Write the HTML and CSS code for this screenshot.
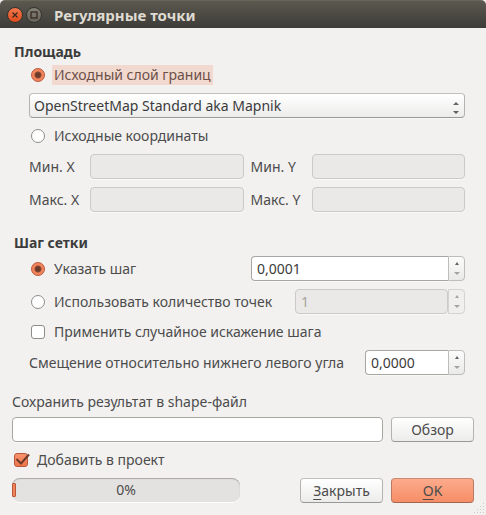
FILE: index.html
```html
<!DOCTYPE html>
<html lang="ru">
<head>
<meta charset="utf-8">
<meta name="viewport" content="width=device-width, initial-scale=1">
<title>Регулярные точки</title>
<link rel="stylesheet" href="styles.css">
</head>
<body>
<div class="window">
  <header class="titlebar">
    <button class="wm wm-close" type="button" aria-label="Закрыть окно">
      <svg viewBox="0 0 14 14"><path d="M4.500 4.500l5 5M9.500 4.500l-5 5"/></svg>
    </button>
    <button class="wm wm-max" type="button" aria-label="Развернуть">
      <svg viewBox="0 0 14 14"><rect x="4" y="4" width="6" height="6"/></svg>
    </button>
    <h1 class="title">Регулярные точки</h1>
  </header>

  <form class="dialog">
    <section class="group">
      <h2 class="heading">Площадь</h2>
      <div class="group-body">
        <div class="option">
          <input class="radio" type="radio" name="area" id="area-layer" checked>
          <label class="option-label focused" for="area-layer">Исходный слой границ</label>
        </div>
        <div class="select-box">
          <select class="field select" aria-label="Слой границ">
            <option>OpenStreetMap Standard aka Mapnik</option>
          </select>
          <svg class="select-arrows" viewBox="0 0 6 12"><path d="M0 3L3 0l3 3zM0 9h6l-3 3z"/></svg>
        </div>
        <div class="option">
          <input class="radio" type="radio" name="area" id="area-coords">
          <label class="option-label" for="area-coords">Исходные координаты</label>
        </div>
        <div class="coords">
          <label for="min-x">Мин. X</label>
          <input class="field" id="min-x" type="text" disabled>
          <label class="second" for="min-y">Мин. Y</label>
          <input class="field" id="min-y" type="text" disabled>
          <label for="max-x">Макс. X</label>
          <input class="field" id="max-x" type="text" disabled>
          <label class="second" for="max-y">Макс. Y</label>
          <input class="field" id="max-y" type="text" disabled>
        </div>
      </div>
    </section>

    <section class="group">
      <h2 class="heading">Шаг сетки</h2>
      <div class="group-body">
        <div class="row">
          <div class="option">
            <input class="radio" type="radio" name="grid" id="grid-step" checked>
            <label class="option-label" for="grid-step">Указать шаг</label>
          </div>
          <div class="spin spin-wide">
            <input class="field" type="text" value="0,0001" aria-label="Шаг">
            <div class="spin-buttons">
              <button type="button" aria-label="Больше"><svg viewBox="0 0 6 3"><path d="M1 3l2-3 2 3z"/></svg></button>
              <button type="button" aria-label="Меньше"><svg class="down" viewBox="0 0 6 3"><path d="M0 0h6L3 3z"/></svg></button>
            </div>
          </div>
        </div>
        <div class="row">
          <div class="option">
            <input class="radio" type="radio" name="grid" id="grid-count">
            <label class="option-label" for="grid-count">Использовать количество точек</label>
          </div>
          <div class="spin spin-medium spin-disabled">
            <input class="field" type="text" value="1" aria-label="Количество точек" disabled>
            <div class="spin-buttons">
              <button type="button" aria-label="Больше" disabled><svg viewBox="0 0 6 3"><path d="M1 3l2-3 2 3z"/></svg></button>
              <button type="button" aria-label="Меньше" disabled><svg class="down" viewBox="0 0 6 3"><path d="M0 0h6L3 3z"/></svg></button>
            </div>
          </div>
        </div>
        <div class="option">
          <input class="checkbox" type="checkbox" id="jitter">
          <label class="option-label" for="jitter">Применить случайное искажение шага</label>
        </div>
        <div class="row">
          <label for="inset">Смещение относительно нижнего левого угла</label>
          <div class="spin spin-narrow">
            <input class="field" type="text" id="inset" value="0,0000">
            <div class="spin-buttons">
              <button type="button" aria-label="Больше"><svg viewBox="0 0 6 3"><path d="M1 3l2-3 2 3z"/></svg></button>
              <button type="button" aria-label="Меньше"><svg class="down" viewBox="0 0 6 3"><path d="M0 0h6L3 3z"/></svg></button>
            </div>
          </div>
        </div>
      </div>
    </section>

    <section class="output">
      <label class="output-label" for="output-file">Сохранить результат в shape-файл</label>
      <div class="actions">
        <input class="field file" id="output-file" type="text">
        <button class="button" type="button">Обзор</button>
      </div>
      <div class="option">
        <span class="check-box">
          <input class="checkbox" type="checkbox" id="add" checked>
          <svg class="tick" viewBox="0 0 18 16"><path d="M3.500 7l4.500 4.500L16 2.500"/></svg>
        </span>
        <label class="option-label" for="add">Добавить в проект</label>
      </div>
      <div class="actions">
        <div class="progress" role="progressbar" aria-valuenow="0" aria-valuemin="0" aria-valuemax="100" aria-label="Выполнение"><span class="progress-chunk"></span><span class="progress-text">0%</span></div>
        <button class="button push" type="button"><u>З</u>акрыть</button>
        <button class="button primary" type="submit"><u>O</u>K</button>
      </div>
    </section>
  </form>
  <svg class="grip" viewBox="0 0 12 12" aria-hidden="true"><path d="M10 1.500h1M7 4.500h1M10 4.500h1M4 7.500h1M7 7.500h1M10 7.500h1M1 10.500h1M4 10.500h1M7 10.500h1M10 10.500h1"/></svg>
</div>
</body>
</html>
```
FILE: styles.css
```css
* { box-sizing: border-box; }

body {
  margin: 0;
  background: #f2f1f0;
  color: #4c4c4c;
  font: 14px/20px "Noto Sans", "Open Sans", sans-serif;
}

input, select, button {
  margin: 0;
  font: inherit;
  color: inherit;
}

.window {
  position: relative;
  min-height: 100vh;
}

.titlebar {
  display: flex;
  align-items: center;
  gap: 3px;
  height: 28px;
  padding: 0 7px;
  background: linear-gradient(#5b584f, #3d3c37);
  border-top: 1px solid #696559;
  border-radius: 5px 5px 0 0;
}

.wm {
  width: 16px;
  height: 16px;
  padding: 0;
  border: 1px solid #35332e;
  border-radius: 50%;
  display: flex;
}
.wm svg {
  width: 14px;
  height: 14px;
  fill: none;
  stroke: #3a2a22;
  stroke-width: 1.3;
}
.wm-close { background: linear-gradient(#f4784e, #df4c1b); }
.wm-max { background: linear-gradient(#85827a, #65635b); }

.title {
  margin: 0 0 0 9px;
  font-size: 15px;
  font-weight: bold;
  color: #dfdbd2;
}

.dialog {
  display: flex;
  flex-direction: column;
  gap: 21px;
  padding: 14px 12px 12px;
}

.heading {
  margin: 0 0 3px 2px;
  font-size: 14px;
  line-height: 20px;
  color: #3c3c3c;
}

.group-body, .output {
  display: flex;
  flex-direction: column;
  gap: 8px;
}
.group-body { padding: 0 9px 0 17px; }
.output { margin-top: -4px; }
.output-label { margin-bottom: -3px; }

.option {
  display: flex;
  align-items: center;
  gap: 7px;
  padding-left: 2px;
}
.option-label { padding: 0 2px; }
.focused {
  background: #f2d9cf;
  color: #6b5048;
}

.radio, .checkbox {
  appearance: none;
  flex: none;
  width: 14px;
  height: 14px;
  border: 1px solid #8f8d8a;
  background: #fff;
}
.radio { border-radius: 50%; }
.checkbox { border-radius: 3px; }
.radio:checked {
  border-color: #b9573a;
  background: radial-gradient(circle, #6b3a28 0 2px, #8a4a33 3px, #f3835b 4px);
}
.checkbox:checked {
  border-color: #b9573a;
  background: linear-gradient(#f9946f, #ee7447);
}
.check-box {
  position: relative;
  display: flex;
}
.tick {
  position: absolute;
  left: -1px;
  top: -1px;
  width: 18px;
  height: 16px;
  fill: none;
  stroke: #6b3a28;
  stroke-width: 2;
  pointer-events: none;
}

.field {
  display: block;
  width: 100%;
  min-width: 0;
  height: 25px;
  padding: 0 5px;
  border: 1px solid #a9a7a4;
  border-radius: 4px;
  background: #fff;
  color: #3c3c3c;
  box-shadow: 0 1px 0 #f8f8f7;
}
.field:disabled {
  border-color: #cccac8;
  background: #eae9e7;
  color: #a5a3a1;
}

.select-box { position: relative; }
.select {
  appearance: none;
  padding: 0 4px;
  border-color: #c3c1be #b5b3b0 #9a9895;
  background: linear-gradient(#fff, #ececeb);
}
.select-arrows {
  position: absolute;
  right: 6px;
  top: 9px;
  width: 6px;
  height: 12px;
  fill: #626262;
  pointer-events: none;
}

.coords {
  display: grid;
  grid-template-columns: 61px 1fr 68px 1fr;
  gap: 8px 0;
  align-items: center;
}
.second { padding-left: 7px; }

.row {
  display: flex;
  align-items: center;
  justify-content: space-between;
}
.row > label { white-space: nowrap; }

.spin {
  display: flex;
  flex: none;
}
.spin-wide { width: 214px; }
.spin-medium { width: 170px; }
.spin-narrow { width: 100px; }
.spin .field {
  flex: 1;
  border-right: 0;
  border-radius: 4px 0 0 4px;
}
.spin .field:disabled {
  border-right: 1px solid #cccac8;
  border-radius: 4px;
}
.spin-buttons {
  display: flex;
  flex-direction: column;
  width: 17px;
  height: 25px;
  padding: 1px 0;
  border: 1px solid #bfbdba;
  border-radius: 0 4px 4px 0;
  background: linear-gradient(#fcfcfc, #eaeae9);
}
.spin-buttons button {
  flex: 1;
  display: flex;
  align-items: center;
  justify-content: center;
  min-height: 0;
  padding: 0;
  border: 0;
  background: none;
}
.spin-buttons svg {
  width: 6px;
  height: 3px;
  fill: #626262;
}
.spin-buttons .down { fill: #a5a3a1; }
.spin-disabled .spin-buttons {
  border-color: #d5d3d1;
  background: #f0efee;
}
.spin-disabled .spin-buttons svg { fill: #a5a3a1; }

.actions {
  display: flex;
  gap: 8px;
}
.file { flex: 1; }

.button {
  flex: none;
  width: 83px;
  height: 25px;
  padding: 0;
  border: 1px solid;
  border-color: #c3c1be #b5b3b0 #9a9895;
  border-radius: 4px;
  background: linear-gradient(#fff, #ececeb);
  line-height: 22px;
}
.button u { text-underline-offset: 3px; }
.push { margin-left: auto; }
.primary {
  border-color: #c98a72 #b97860 #a0664f;
  background: linear-gradient(#fcab8c, #f68e66);
}

.progress {
  position: relative;
  display: flex;
  align-items: center;
  justify-content: center;
  flex: 0 1 228px;
  height: 24px;
  border-radius: 8px;
  background: #e4e2e0;
  box-shadow: inset 0 1px 1px #a9a7a4, 0 1px 0 #fff;
}
.progress-chunk {
  position: absolute;
  left: 0;
  width: 4px;
  height: 14px;
  border: 1px solid #b9573a;
  border-radius: 1px;
  background: #f3835b;
}

.grip {
  position: absolute;
  right: 1px;
  bottom: 1px;
  width: 12px;
  height: 12px;
  stroke: #cccac8;
  stroke-width: 1;
}
```
